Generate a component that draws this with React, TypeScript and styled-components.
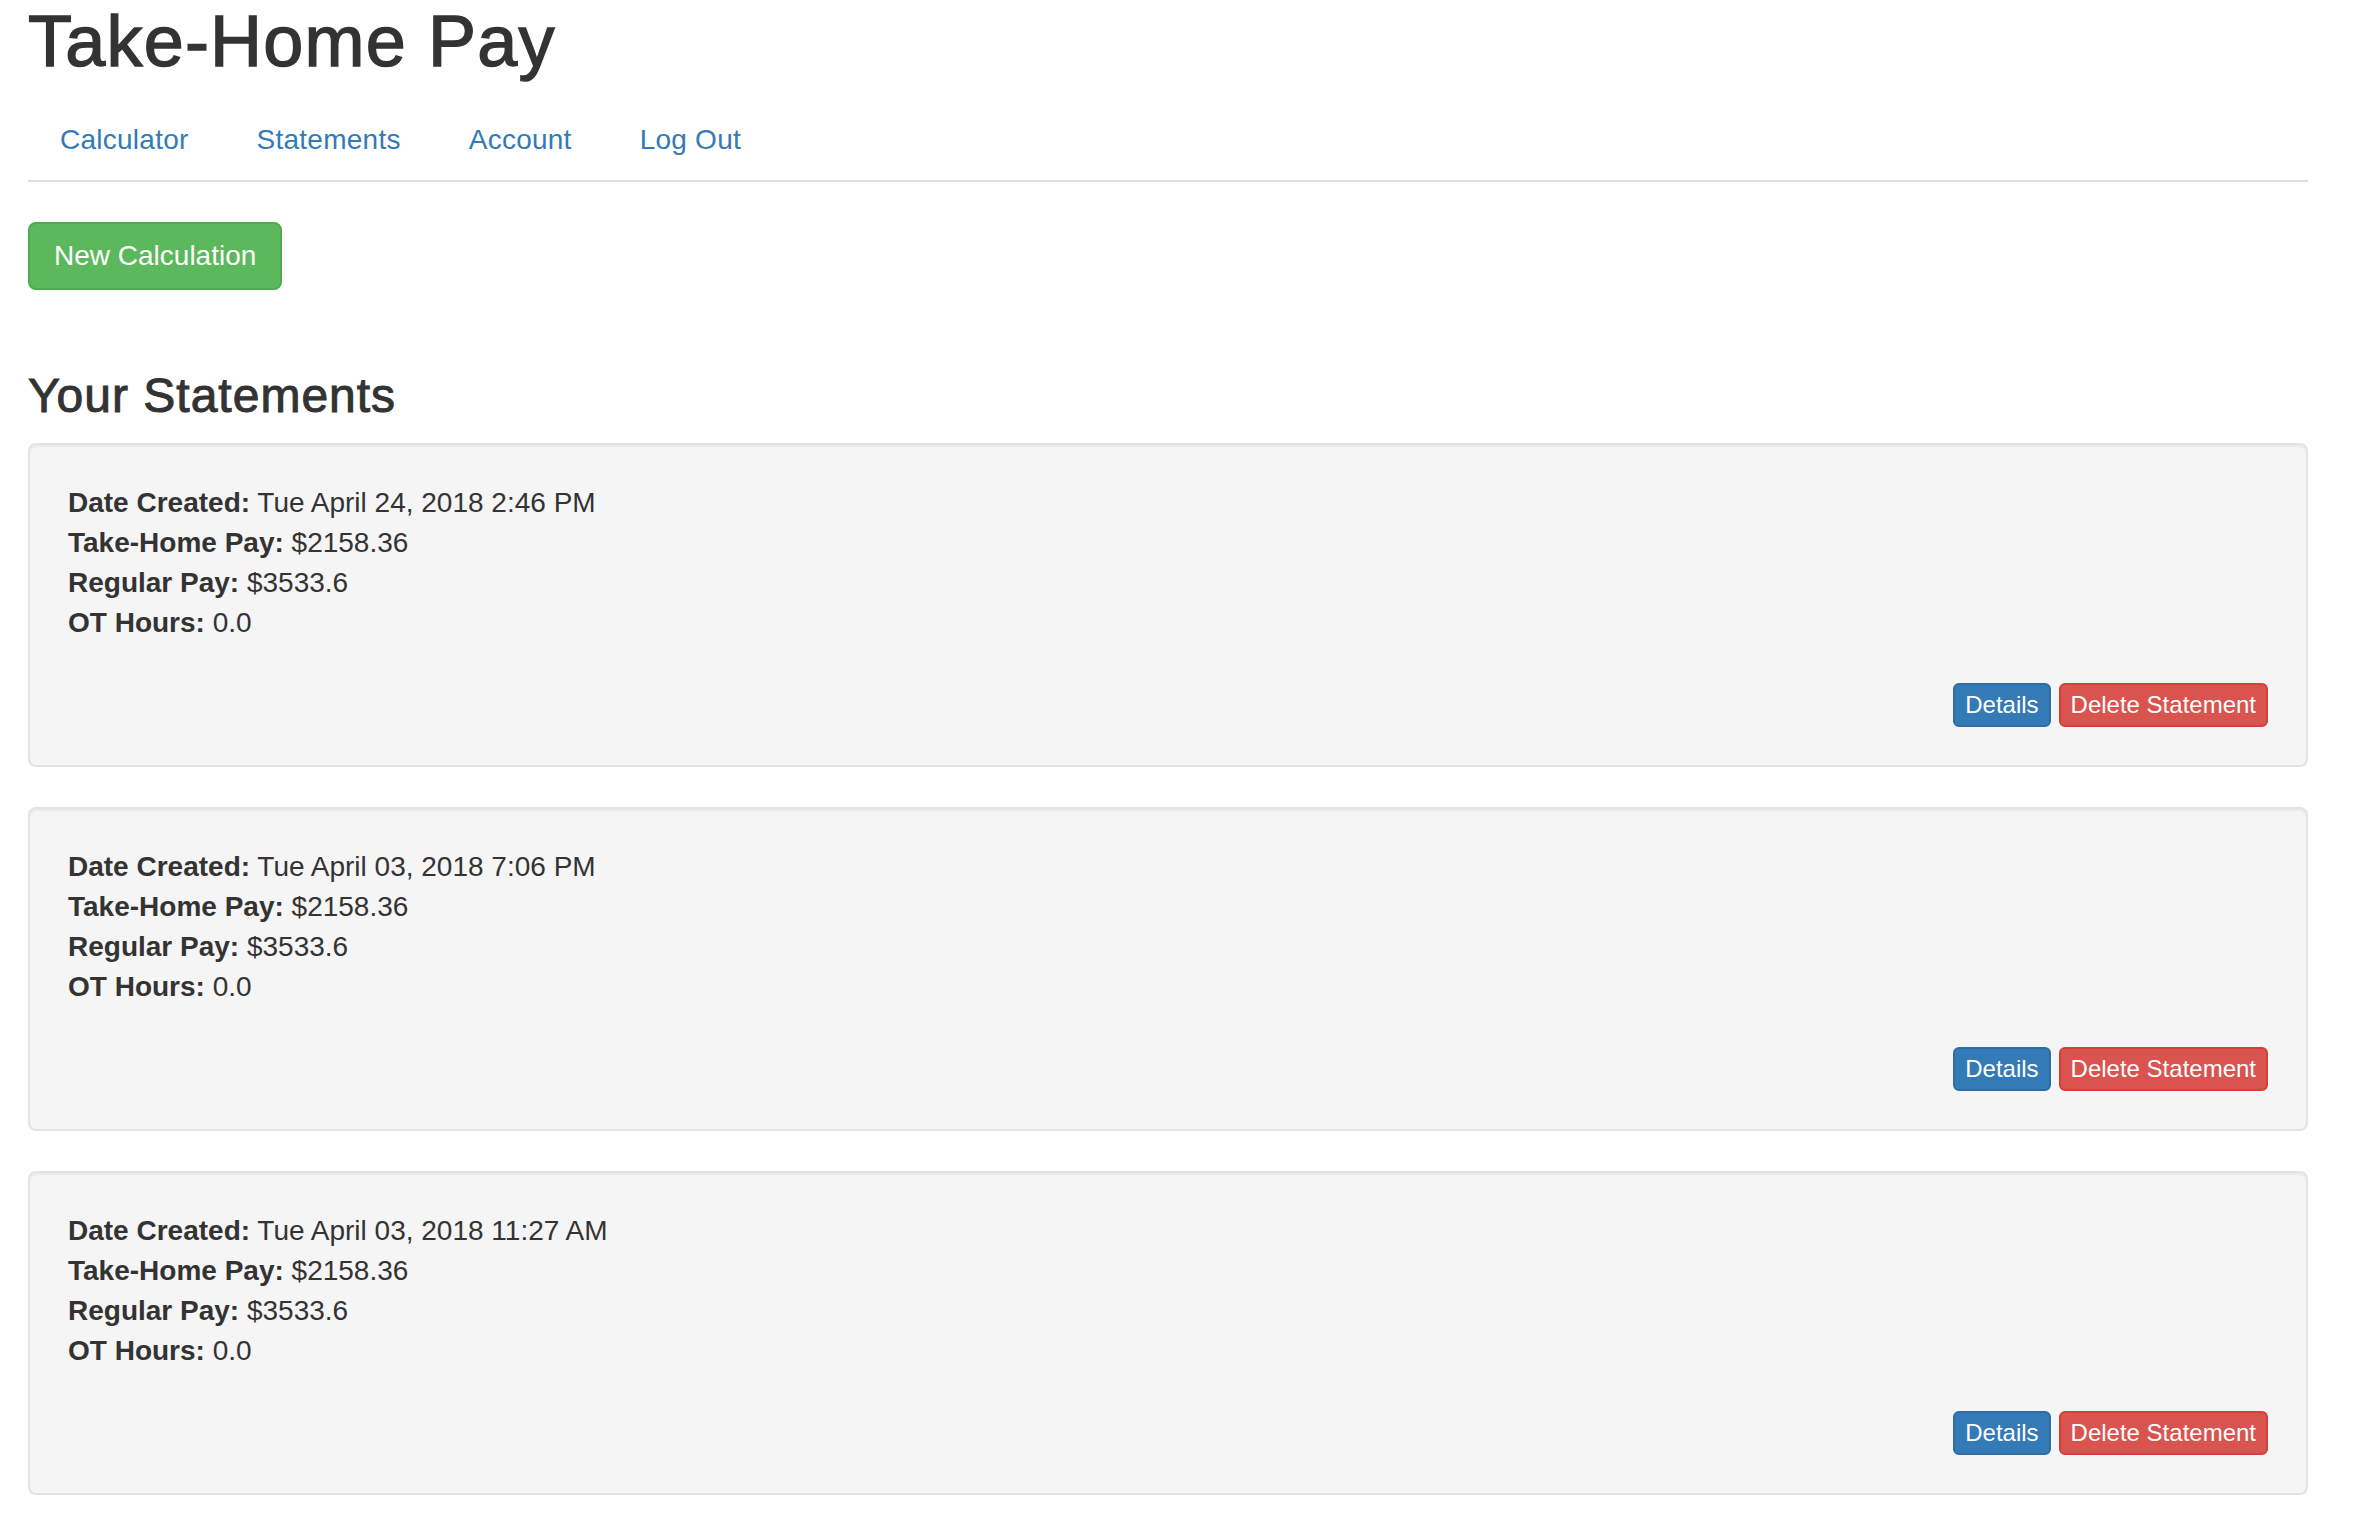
import React from 'react';
import styled, { createGlobalStyle } from 'styled-components';

const GlobalStyle = createGlobalStyle`
  html, body {
    margin: 0;
    padding: 0;
    background: #fff;
  }
  body {
    font-family: "Liberation Sans", Arial, Helvetica, sans-serif;
    font-size: 28px;
    line-height: 40px;
    color: #333;
  }
  *, *::before, *::after {
    box-sizing: border-box;
  }
`;

const Page = styled.div`
  padding: 2px 64px 20px 28px;
`;

const Title = styled.h1`
  margin: 0 0 17px;
  font-size: 72px;
  line-height: 79px;
  font-weight: 500;
  letter-spacing: 1.2px;
  color: #333;
  -webkit-text-stroke: 1.4px #333;
`;

const Tabs = styled.ul`
  display: flex;
  margin: 0;
  padding: 0;
  list-style: none;
  border-bottom: 2px solid #ddd;
`;

const Tab = styled.li`
  margin: 0 4px -2px 0;
`;

const TabLink = styled.a`
  display: block;
  padding: 20px 30px;
  border: 2px solid transparent;
  border-radius: 8px 8px 0 0;
  line-height: 40px;
  letter-spacing: 0.25px;
  color: #337ab7;
  text-decoration: none;
  cursor: pointer;
`;

const Toolbar = styled.div`
  display: flex;
  margin-top: 40px;
`;

type Variant = 'success' | 'primary' | 'danger';

const palette: Record<Variant, { bg: string; border: string }> = {
  success: { bg: '#5cb85c', border: '#4cae4c' },
  primary: { bg: '#337ab7', border: '#2e6da4' },
  danger: { bg: '#d9534f', border: '#d43f3a' },
};

const Button = styled.button<{ $variant: Variant; $small?: boolean }>`
  display: inline-block;
  margin: 0;
  font-family: inherit;
  font-weight: 400;
  color: #fff;
  white-space: nowrap;
  cursor: pointer;
  background: ${(p) => palette[p.$variant].bg};
  border: 2px solid ${(p) => palette[p.$variant].border};
  font-size: ${(p) => (p.$small ? '24px' : '28px')};
  line-height: ${(p) => (p.$small ? '36px' : '40px')};
  padding: ${(p) => (p.$small ? '2px 10px' : '12px 24px')};
  border-radius: ${(p) => (p.$small ? '6px' : '8px')};
`;

const SectionTitle = styled.h3`
  margin: 80px 0 20px;
  font-size: 48px;
  line-height: 52.8px;
  font-weight: 500;
  letter-spacing: 1px;
  color: #333;
  -webkit-text-stroke: 1px #333;
`;

const StatementList = styled.div`
  display: flex;
  flex-direction: column;
  gap: 40px;
`;

const Well = styled.div`
  padding: 38px;
  background: #f5f5f5;
  border: 2px solid #e3e3e3;
  border-radius: 8px;
  box-shadow: inset 0 2px 2px rgba(0, 0, 0, 0.05);
`;

const Info = styled.div`
  display: flex;
  flex-direction: column;
`;

const InfoLine = styled.div`
  line-height: 40px;
  white-space: nowrap;
`;

const Label = styled.strong`
  font-weight: 700;
`;

const CardActions = styled.div`
  display: flex;
  justify-content: flex-end;
  gap: 8px;
  margin-top: 40px;
`;

type Statement = {
  date: string;
  takeHome: string;
  regular: string;
  ot: string;
};

const statements: Statement[] = [
  { date: 'Tue April 24, 2018 2:46 PM', takeHome: '$2158.36', regular: '$3533.6', ot: '0.0' },
  { date: 'Tue April 03, 2018 7:06 PM', takeHome: '$2158.36', regular: '$3533.6', ot: '0.0' },
  { date: 'Tue April 03, 2018 11:27 AM', takeHome: '$2158.36', regular: '$3533.6', ot: '0.0' },
];

const navItems = ['Calculator', 'Statements', 'Account', 'Log Out'];

export default function App() {
  return (
    <>
      <GlobalStyle />
      <Page>
        <Title>Take-Home Pay</Title>
        <Tabs>
          {navItems.map((n) => (
            <Tab key={n}>
              <TabLink>{n}</TabLink>
            </Tab>
          ))}
        </Tabs>
        <Toolbar>
          <Button $variant="success">New Calculation</Button>
        </Toolbar>
        <SectionTitle>Your Statements</SectionTitle>
        <StatementList>
          {statements.map((s, i) => (
            <Well key={i}>
              <Info>
                <InfoLine>
                  <Label>Date Created:</Label> {s.date}
                </InfoLine>
                <InfoLine>
                  <Label>Take-Home Pay:</Label> {s.takeHome}
                </InfoLine>
                <InfoLine>
                  <Label>Regular Pay:</Label> {s.regular}
                </InfoLine>
                <InfoLine>
                  <Label>OT Hours:</Label> {s.ot}
                </InfoLine>
              </Info>
              <CardActions>
                <Button $variant="primary" $small>
                  Details
                </Button>
                <Button $variant="danger" $small>
                  Delete Statement
                </Button>
              </CardActions>
            </Well>
          ))}
        </StatementList>
      </Page>
    </>
  );
}
